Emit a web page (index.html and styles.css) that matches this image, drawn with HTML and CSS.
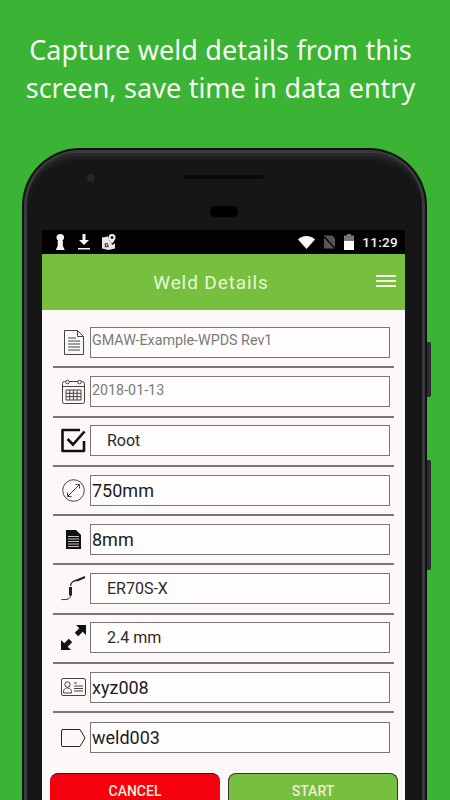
FILE: index.html
```html
<!DOCTYPE html>
<html lang="en">
<head>
<meta charset="utf-8">
<title>Weld Details</title>
<link rel="stylesheet" href="styles.css">
</head>
<body>
<div class="page">
  <h1 class="headline">Capture weld details from this<br>screen, save time in data entry</h1>
  <div class="phone">
    <span class="side-btn side-btn-a"></span>
    <span class="side-btn side-btn-b"></span>
    <div class="bezel">
      <div class="sensors">
        <span class="camera"></span>
        <span class="speaker"></span>
        <span class="earpiece"></span>
      </div>
      <div class="screen">
        <div class="status">
          <div class="status-left">
            <svg class="si" width="11" height="16" viewBox="0 0 11 17"><path fill="#f4f4f4" d="M5.500 0C8 0 9.300 1.600 9.300 3.600c0 1.500-.8 2.600-1.800 3.100l.6 1.300-.2 3.500c0 1.500.9 3 2.100 5.500H.5c1.200-2.500 2.100-4 2.100-5.500L2.400 8l.6-1.300C2 6.200 1.200 5.100 1.200 3.600 1.200 1.600 3 0 5.500 0z"/></svg>
            <svg class="si" width="12" height="16" viewBox="0 0 12 16"><path fill="#f4f4f4" d="M4.500 0h3v6H11L6 11 1 6h3.500zM0 14h12v1.600H0z"/></svg>
            <svg class="si" width="14" height="16" viewBox="0 0 14 16"><path fill="#e8e8e8" d="M0 3.500l6-1 1.500 4 3 4.500L13 9v5.500L6.500 16 0 14.500z"/><path fill="none" stroke="#333" stroke-width="1.100" d="M6 9.700H3.300v3H6v-1.400H4.700"/><path fill="#f4f4f4" d="M10 0a3.500 3.500 0 0 1 3.500 3.500C13.500 6 10 9.500 10 9.500S6.500 6 6.500 3.500A3.500 3.500 0 0 1 10 0z"/><circle cx="10" cy="3.500" r="1.500" fill="#111"/></svg>
          </div>
          <div class="status-right">
            <svg class="si" width="17" height="13" viewBox="0 0 17 13"><path fill="#f6f6f6" d="M8.500 13L0 3.500C2 1.500 5 0 8.500 0S15 1.500 17 3.500z"/></svg>
            <svg class="si" width="11" height="14" viewBox="0 0 12 14"><path fill="#555" d="M0 0h9l3 3v11H0z"/><path stroke="#000" stroke-width="1.300" d="M0 1l12 13"/></svg>
            <svg class="si" width="10" height="16" viewBox="0 0 10 16"><path fill="#777" d="M3 0h4v1.500h3V7H0V1.500h3z"/><path fill="#fff" d="M0 7h10v9H0z"/></svg>
            <span class="clock">11:29</span>
          </div>
        </div>
        <header class="appbar">
          <span class="appbar-title">Weld Details</span>
          <span class="burger"><i></i><i></i><i></i></span>
        </header>
        <main class="content">
          <div class="row">
            <span class="ico"><svg width="20" height="25" viewBox="0 0 20 25" fill="none" stroke="#444" stroke-width="1"><path d="M.5.500h13l6 6v18H.5z"/><path d="M13.500.500v6h6"/><path d="M4 8h8M4 11h12M4 14h12M4 17h12M4 20h12"/></svg></span>
            <span class="field muted small">GMAW-Example-WPDS Rev1</span>
          </div>
          <div class="row">
            <span class="ico"><svg width="23" height="25" viewBox="0 0 23 25" fill="none" stroke="#444"><rect x=".5" y="2.500" width="22" height="22" rx="2"/><path d="M.5 7.500h22"/><circle cx="5.500" cy="3" r="1.800" fill="#fff"/><circle cx="17.500" cy="3" r="1.800" fill="#fff"/><path d="M4 11h15v10H4zM4 14.300h15M4 17.600h15M7.700 11v10M11.400 11v10M15.100 11v10"/></svg></span>
            <span class="field muted small date">2018-01-13</span>
          </div>
          <div class="row">
            <span class="ico"><svg width="25" height="25" viewBox="0 0 25 25" fill="none" stroke="#111"><path stroke-width="2.600" stroke-linejoin="round" d="M23 13v10H1.500V2H19"/><path stroke-width="2.600" d="M6.500 11l5.500 5.500L23.500 3.500"/></svg></span>
            <span class="field indent">Root</span>
          </div>
          <div class="row">
            <span class="ico"><svg width="23" height="23" viewBox="0 0 23 23" fill="none" stroke="#444"><circle cx="11.500" cy="11.500" r="10.800"/><path d="M5.500 17.500l12-12"/><path d="M5.500 13.500v4h4M13.500 5.500h4v4"/></svg></span>
            <span class="field">750mm</span>
          </div>
          <div class="row">
            <span class="ico"><svg width="15" height="19" viewBox="0 0 15 19"><path fill="#111" d="M0 0h10l5 5v14H0z"/><path stroke="#eee" stroke-width=".8" d="M2 6.500h11M2 9h11M2 11.500h11M2 14h11M2 16.500h11"/></svg></span>
            <span class="field">8mm</span>
          </div>
          <div class="row">
            <span class="ico"><svg width="25" height="25" viewBox="0 0 25 25" fill="none" stroke="#222"><path stroke-width="2" d="M16 4.500l8-3.500"/><path stroke-width="1.300" d="M18 4c-5 .5-8 1.500-8.500 6"/><path stroke-width="3" d="M9.500 11v8.500"/><path stroke-width="1" d="M9.500 19c0 4-3 5-9 4.500"/></svg></span>
            <span class="field indent">ER70S-X</span>
          </div>
          <div class="row">
            <span class="ico"><svg width="25" height="25" viewBox="0 0 25 25"><path fill="#111" d="M15 0h10v10l-3.300-3.300-4.500 4.500-3.400-3.400 4.500-4.500zM0 25V15l3.300 3.300 4.500-4.500 3.400 3.400-4.500 4.500L10 25z"/></svg></span>
            <span class="field indent">2.4 mm</span>
          </div>
          <div class="row">
            <span class="ico"><svg width="25" height="18" viewBox="0 0 25 18" fill="none" stroke="#444"><rect x=".5" y=".5" width="24" height="17" rx="1.500"/><circle cx="6.500" cy="6.500" r="2.700"/><path d="M2.500 15c0-4 1.500-5 4-5s4 1 4 5z"/><path d="M13 5h3M13 8h9M13 10.500h9M13 13h9"/></svg></span>
            <span class="field">xyz008</span>
          </div>
          <div class="row">
            <span class="ico"><svg width="25" height="18" viewBox="0 0 25 18" fill="none" stroke="#222" stroke-width="1"><path stroke-linejoin="round" d="M2 .5h17l5 8.500-5 8.500H2A1.500 1.500 0 0 1 .5 16V2A1.500 1.500 0 0 1 2 .5z"/></svg></span>
            <span class="field">weld003</span>
          </div>
          <div class="actions">
            <button class="btn btn-cancel">CANCEL</button>
            <button class="btn btn-start">START</button>
          </div>
        </main>
      </div>
    </div>
  </div>
</div>
</body>
</html>
```
FILE: styles.css
```css
* { box-sizing: border-box; }
html, body { margin: 0; padding: 0; }
body { width: 450px; height: 800px; overflow: hidden; background: #3bb335; font-family: "Roboto", "Liberation Sans", sans-serif; }
.page { height: 800px; overflow: hidden; display: flex; flex-direction: column; align-items: center; }
.headline { margin: 31px 0 0; height: 117px; flex: none; padding-right: 9px; font: 400 27px/38px "Noto Sans", "Open Sans", sans-serif; word-spacing: .5px; color: #f4fbf0; text-align: center; white-space: nowrap; }
.phone { position: relative; width: 405px; margin-left: -1px; flex: none; background: #3a3a3e; border: 2px solid #111; border-bottom: 0; border-radius: 58px 58px 0 0; padding: 3px 3px 0; height: 660px; }
.side-btn { position: absolute; right: -6px; width: 4px; background: #2c2c2e; border-radius: 0 2px 2px 0; }
.side-btn-a { top: 192px; height: 55px; }
.side-btn-b { top: 310px; height: 110px; }
.bezel { height: 100%; background: #161618; border-radius: 52px 52px 0 0; padding: 0 15px; box-shadow: inset 0 9px 6px -5px #2e2e32; }
.sensors { height: 77px; position: relative; }
.camera { position: absolute; left: 45px; top: 21px; width: 8px; height: 8px; border-radius: 50%; background: #26262a; }
.speaker { position: absolute; left: 141px; top: 22px; width: 81px; height: 4px; border-radius: 2px; background: #0b0b0c; }
.earpiece { position: absolute; left: 168px; top: 53px; width: 28px; height: 11px; border-radius: 6px; background: #000; }
.screen { width: 363px; height: 570px; display: flex; flex-direction: column; }
.status { height: 24px; flex: none; background: #020202; display: flex; align-items: center; justify-content: space-between; padding: 0 7px 0 13px; }
.status-left { display: flex; align-items: center; gap: 12px; }
.status-right { display: flex; align-items: center; gap: 9px; }
.si { display: block; flex: none; }
.clock { color: #f2f2f2; font-size: 13.500px; font-weight: 500; letter-spacing: .3px; margin-left: -1px; }
.appbar { height: 56px; flex: none; background: #76bf3f; position: relative; display: flex; align-items: center; justify-content: center; padding-right: 25px; }
.appbar-title { color: #e6f8d8; font: 400 19px "Roboto", sans-serif; letter-spacing: .9px; }
.burger { position: absolute; right: 9px; top: 21px; width: 20px; display: flex; flex-direction: column; gap: 3px; }
.burger i { display: block; height: 2px; background: #f0f8e8; }
.content { flex: 1; background: #fcf8f7; padding: 9px 0 0 11px; }
.row { width: 341px; height: 49.300px; display: flex; align-items: center; border-bottom: 2px solid #777; padding: 0 4px 1px 0; }
.row:nth-child(9) { border-bottom: 0; }
.ico { width: 37px; flex: none; display: flex; justify-content: center; padding-left: 4px; }
.field { width: 300px; height: 31px; flex: none; border: 1.500px solid #777; background: #fffdfc; color: #1c1c1c; font-size: 18px; display: flex; align-items: center; padding-left: 1px; white-space: nowrap; }
.muted { color: #7a7a7a; }
.small { font-size: 14.300px; padding-bottom: 5px; }
.date { padding-bottom: 3px; }
.indent { padding-left: 16px; font-size: 16px; color: #2a2a2a; }
.actions { display: flex; gap: 8px; margin-left: -3px; margin-top: 10px; }
.btn { width: 170px; height: 44px; border: 0; border-top: 1px solid #222; border-radius: 8px; color: #f2ecd8; font: 500 14px "Roboto", sans-serif; display: flex; justify-content: center; padding-top: 9px; }
.btn-cancel { background: #f4000f; }
.btn-start { background: #76bf3f; border: 1px solid #333; border-bottom: 0; }
```
